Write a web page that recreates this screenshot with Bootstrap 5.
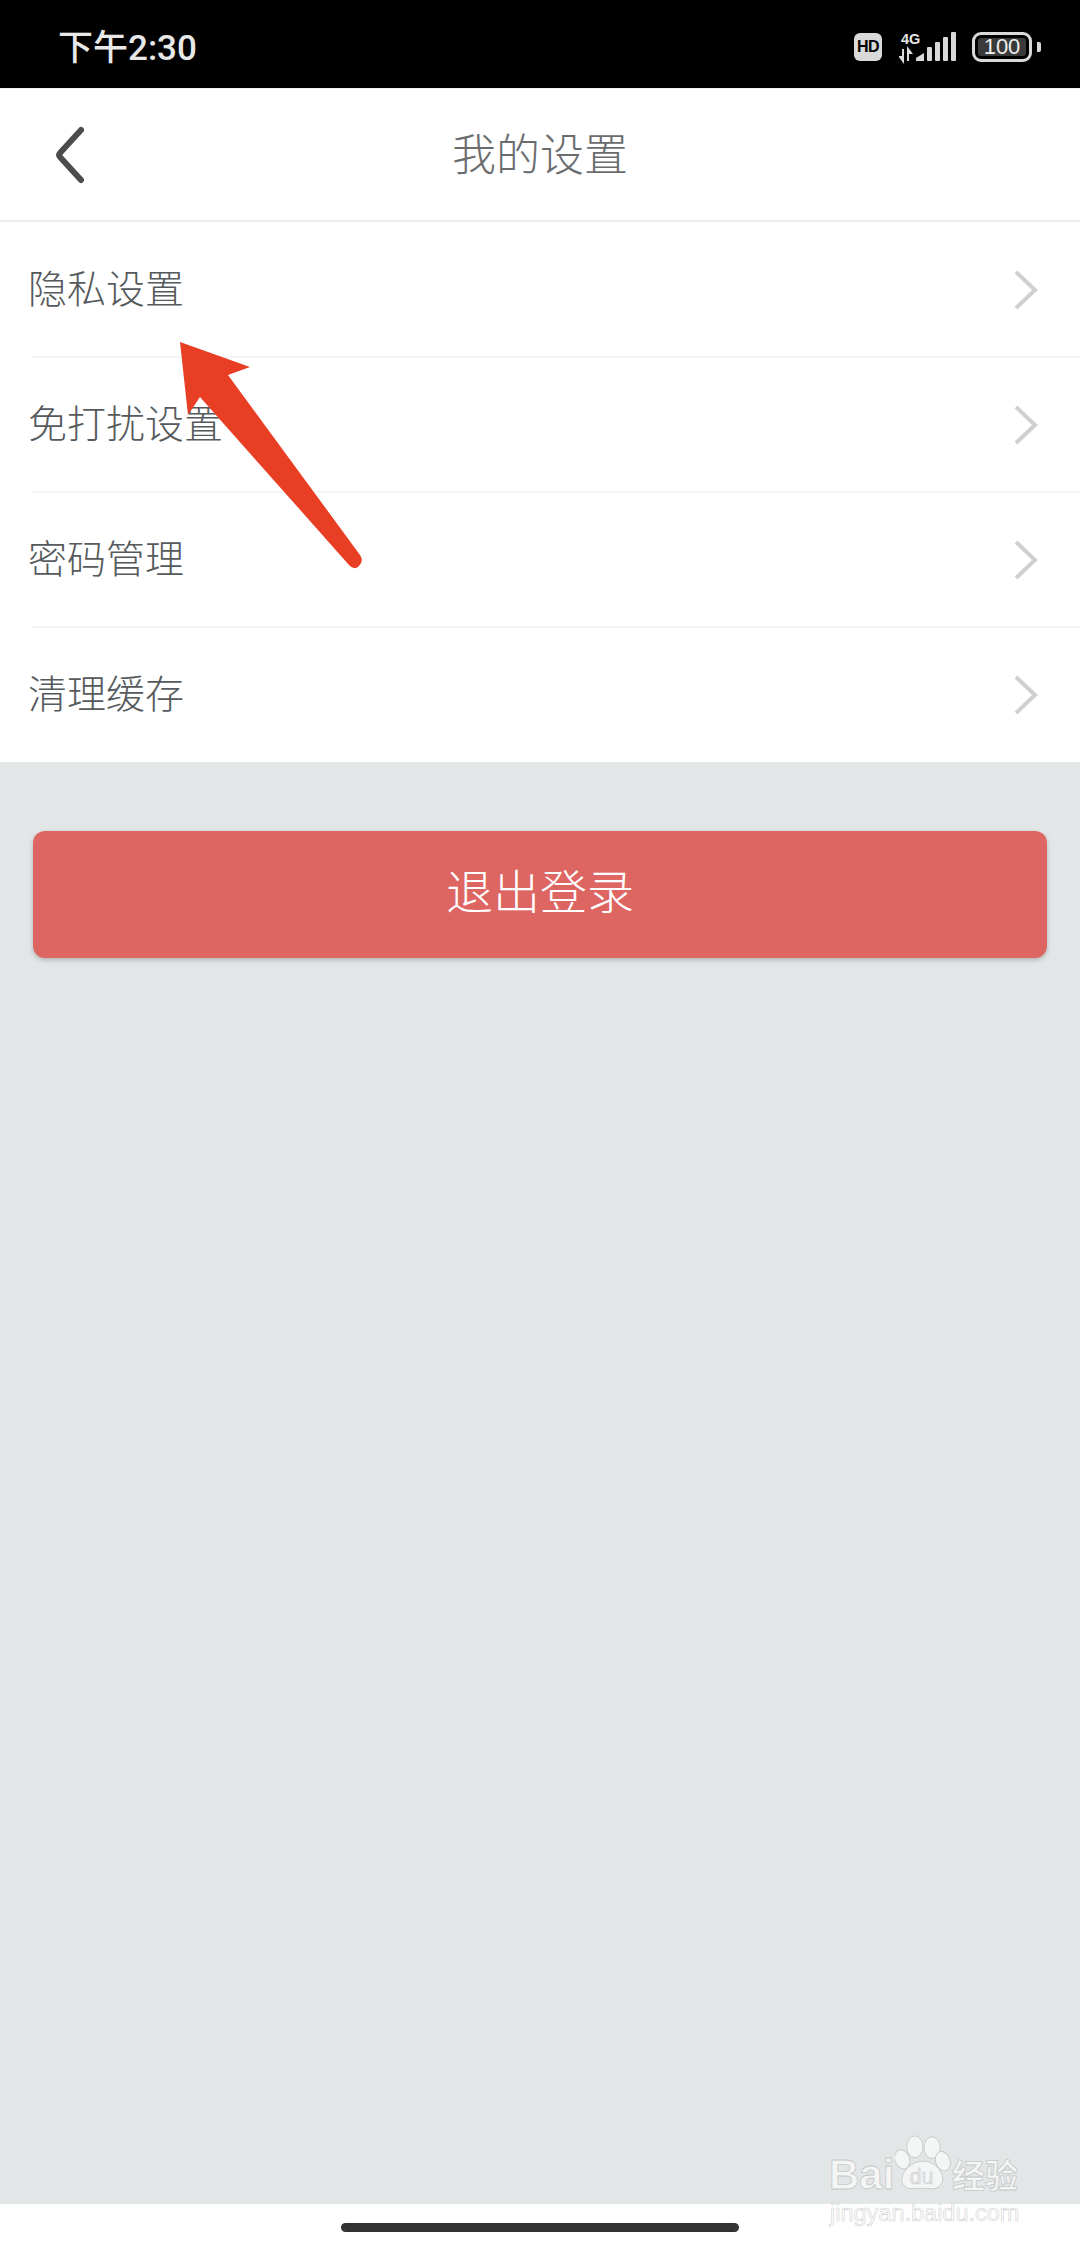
<!DOCTYPE html>
<html lang="zh-CN">
<head>
  <meta charset="UTF-8">
  <title>我的设置</title>
  <meta name="viewport" content="width=device-width, initial-scale=1.0">
  <link href="https://cdn.jsdelivr.net/npm/bootstrap@5.3.3/dist/css/bootstrap.min.css" rel="stylesheet">
  <style>
    html, body { height: 2248px; }
    body {
      width: 1080px;
      margin: 0;
      background: #fff;
      overflow: hidden;
      font-family: "Noto Sans CJK SC", "Liberation Sans", sans-serif;
      position: relative;
    }
    .status-strip {
      height: 88px;
      background: #000;
      padding: 0 39px 0 58px;
    }
    .clock {
      color: #e8e8e8;
      font-size: 35px;
      font-weight: 500;
      line-height: 1;
      padding-top: 8px;
      font-family: "Roboto", "Noto Sans CJK SC", sans-serif;
    }
    .status-icons { margin-top: 6px; }
    .hd-box {
      width: 28px;
      height: 28px;
      background: #d9d9d9;
      color: #000;
      border-radius: 6px;
      font: 700 16px/28px "Liberation Sans", sans-serif;
      text-align: center;
      margin-right: 17px;
      letter-spacing: -.5px;
    }
    .net-icon { margin-right: 15px; display: block; }
    .batt-shell {
      width: 60px;
      height: 30px;
      border: 3px solid #d9d9d9;
      border-radius: 9px;
      padding: 3px;
    }
    .batt-fill {
      height: 100%;
      background: #3a3a3a;
      border-radius: 3px;
      color: #eee;
      font: 400 22px/18px "Liberation Sans", sans-serif;
      text-align: center;
    }
    .batt-nub { width: 4px; height: 10px; background: #d9d9d9; border-radius: 0 2px 2px 0; margin-left: 5px; }
    .title-bar {
      height: 134px;
      border-top: 1px solid #eef0f2;
      border-bottom: 2px solid #eceef1;
      padding-bottom: 6px;
      position: relative;
    }
    .back-btn { position: absolute; left: 55px; top: 37px; display: block; }
    .page-title {
      color: #6a6c6e;
      font-size: 44px;
      font-weight: 300;
      line-height: 1;
    }
    .setting-rows .list-group-item {
      height: 135px;
      padding: 0 42px 0 28px;
      border: 0;
      color: #565a5c;
      font-size: 39px;
      font-weight: 300;
      line-height: 1;
      position: relative;
      background: #fff;
    }
    .setting-rows .list-group-item + .list-group-item::before {
      content: "";
      position: absolute;
      left: 32px;
      right: 0;
      top: -1px;
      height: 2px;
      background: #f3f5f6;
    }
    .row-label { margin-bottom: 6px; }
    .chev { display: block; }
    .logout-zone {
      height: 1442px;
      background: #e3e6e7;
      padding: 69px 33px 0 33px;
    }
    .logout-btn {
      height: 127px;
      background: #dd6663;
      border: 0;
      border-radius: 12px;
      color: #fff;
      font-size: 47px;
      font-weight: 300;
      line-height: 1;
      padding: 0 0 13px;
      box-shadow: 0 2px 5px rgba(0, 0, 0, .22);
    }
    .logout-btn:hover { background: #dd6663; color: #fff; }
    .home-strip { height: 44px; padding-top: 19px; }
    .home-pill { width: 398px; height: 9px; background: #333; border-radius: 5px; }
    .red-arrow { position: absolute; left: 0; top: 0; pointer-events: none; }
    .wm { position: absolute; left: 828px; top: 2130px; width: 200px; height: 100px; pointer-events: none; }
    .wm-bai, .wm-cn, .wm-url {
      position: absolute;
      color: #f4f5f5;
      -webkit-text-stroke: .8px #c6c8c9;
      line-height: 1;
      white-space: nowrap;
    }
    .wm-bai { left: 1px; top: 24px; font: 700 42px/1 "Liberation Sans", sans-serif; }
    .wm-cn { left: 124px; top: 28px; font-size: 33px; font-weight: 700; }
    .wm-url { left: 2px; top: 72px; font: 400 23.5px/1 "Liberation Sans", sans-serif; color: #fff; -webkit-text-stroke: .6px #cfd1d2; }
    .wm-paw { position: absolute; left: 67px; top: 3px; }
  </style>
</head>
<body>

<div class="status-strip d-flex align-items-center justify-content-between">
  <div class="clock">下午2:30</div>
  <div class="status-icons d-flex align-items-center">
    <div class="hd-box">HD</div>
    <svg class="net-icon" width="58" height="34" viewBox="0 -2 58 34">
      <text x="2" y="11.5" font-family="Liberation Sans, sans-serif" font-weight="700" font-size="14.5" fill="#e6e6e6">4G</text>
      <path d="M4 17v12l-3-4h3M9 29V17l3 4h-3" fill="none" stroke="#d9d9d9" stroke-width="2"/>
      <path d="M17 29v-3l8-5v8z" fill="#d9d9d9"/>
      <rect x="28" y="15" width="5" height="14" rx="1" fill="#d9d9d9"/>
      <rect x="36" y="10" width="5" height="19" rx="1" fill="#d9d9d9"/>
      <rect x="44" y="5" width="5" height="24" rx="1" fill="#d9d9d9"/>
      <rect x="52" y="0" width="5" height="29" rx="1" fill="#d9d9d9"/>
    </svg>
    <div class="batt-shell"><div class="batt-fill">100</div></div>
    <div class="batt-nub"></div>
  </div>
</div>

<div class="title-bar d-flex align-items-center justify-content-center">
  <svg class="back-btn" width="30" height="58" viewBox="0 0 30 58">
    <path d="M26 4 L5 27 Q3 29 5 31 L26 54" fill="none" stroke="#4a4c4e" stroke-width="6" stroke-linecap="round"/>
  </svg>
  <div class="page-title">我的设置</div>
</div>

<div class="list-group list-group-flush setting-rows">
  <a class="list-group-item d-flex align-items-center justify-content-between" href="#"><span class="row-label">隐私设置</span>
    <svg class="chev" width="24" height="40" viewBox="0 0 24 40"><path d="M2 2 L21 20 L2 38" fill="none" stroke="#cfd0d1" stroke-width="4"/></svg>
  </a>
  <a class="list-group-item d-flex align-items-center justify-content-between" href="#"><span class="row-label">免打扰设置</span>
    <svg class="chev" width="24" height="40" viewBox="0 0 24 40"><path d="M2 2 L21 20 L2 38" fill="none" stroke="#cfd0d1" stroke-width="4"/></svg>
  </a>
  <a class="list-group-item d-flex align-items-center justify-content-between" href="#"><span class="row-label">密码管理</span>
    <svg class="chev" width="24" height="40" viewBox="0 0 24 40"><path d="M2 2 L21 20 L2 38" fill="none" stroke="#cfd0d1" stroke-width="4"/></svg>
  </a>
  <a class="list-group-item d-flex align-items-center justify-content-between" href="#"><span class="row-label">清理缓存</span>
    <svg class="chev" width="24" height="40" viewBox="0 0 24 40"><path d="M2 2 L21 20 L2 38" fill="none" stroke="#cfd0d1" stroke-width="4"/></svg>
  </a>
</div>

<div class="logout-zone">
  <button type="button" class="btn logout-btn w-100 d-flex align-items-center justify-content-center">退出登录</button>
</div>

<div class="home-strip d-flex justify-content-center">
  <div class="home-pill"></div>
</div>

<!-- annotation arrow drawn over the list -->
<svg class="red-arrow" width="1080" height="600" viewBox="0 0 1080 600">
  <path d="M180 342 L250 367 L228 375 L360 555 Q364 561 359 566 Q354 571 349 565 L200 397 L188 415 Z" fill="#e83e23"/>
</svg>

<div class="wm">
  <div class="wm-bai">Bai</div>
  <svg class="wm-paw" width="56" height="60" viewBox="0 0 62 64">
    <g fill="#f4f5f5" stroke="#c6c8c9" stroke-width="1">
      <ellipse cx="22" cy="14" rx="9" ry="12"/>
      <ellipse cx="41" cy="15" rx="9" ry="12"/>
      <ellipse cx="8" cy="28" rx="8" ry="11" transform="rotate(-20 8 28)"/>
      <ellipse cx="53" cy="30" rx="8" ry="11" transform="rotate(-20 53 30)"/>
      <path d="M31 30 C45 30 56 44 52 54 C48 63 38 60 31 60 C22 60 12 63 8 54 C5 44 17 30 31 30Z"/>
    </g>
    <text x="16" y="55" font-family="Liberation Sans, sans-serif" font-size="24" fill="#e3e6e7" stroke="#c6c8c9" stroke-width=".5">du</text>
  </svg>
  <div class="wm-cn">经验</div>
  <div class="wm-url">jingyan.baidu.com</div>
</div>

<script src="https://cdn.jsdelivr.net/npm/bootstrap@5.3.3/dist/js/bootstrap.bundle.min.js"></script>
</body>
</html>
